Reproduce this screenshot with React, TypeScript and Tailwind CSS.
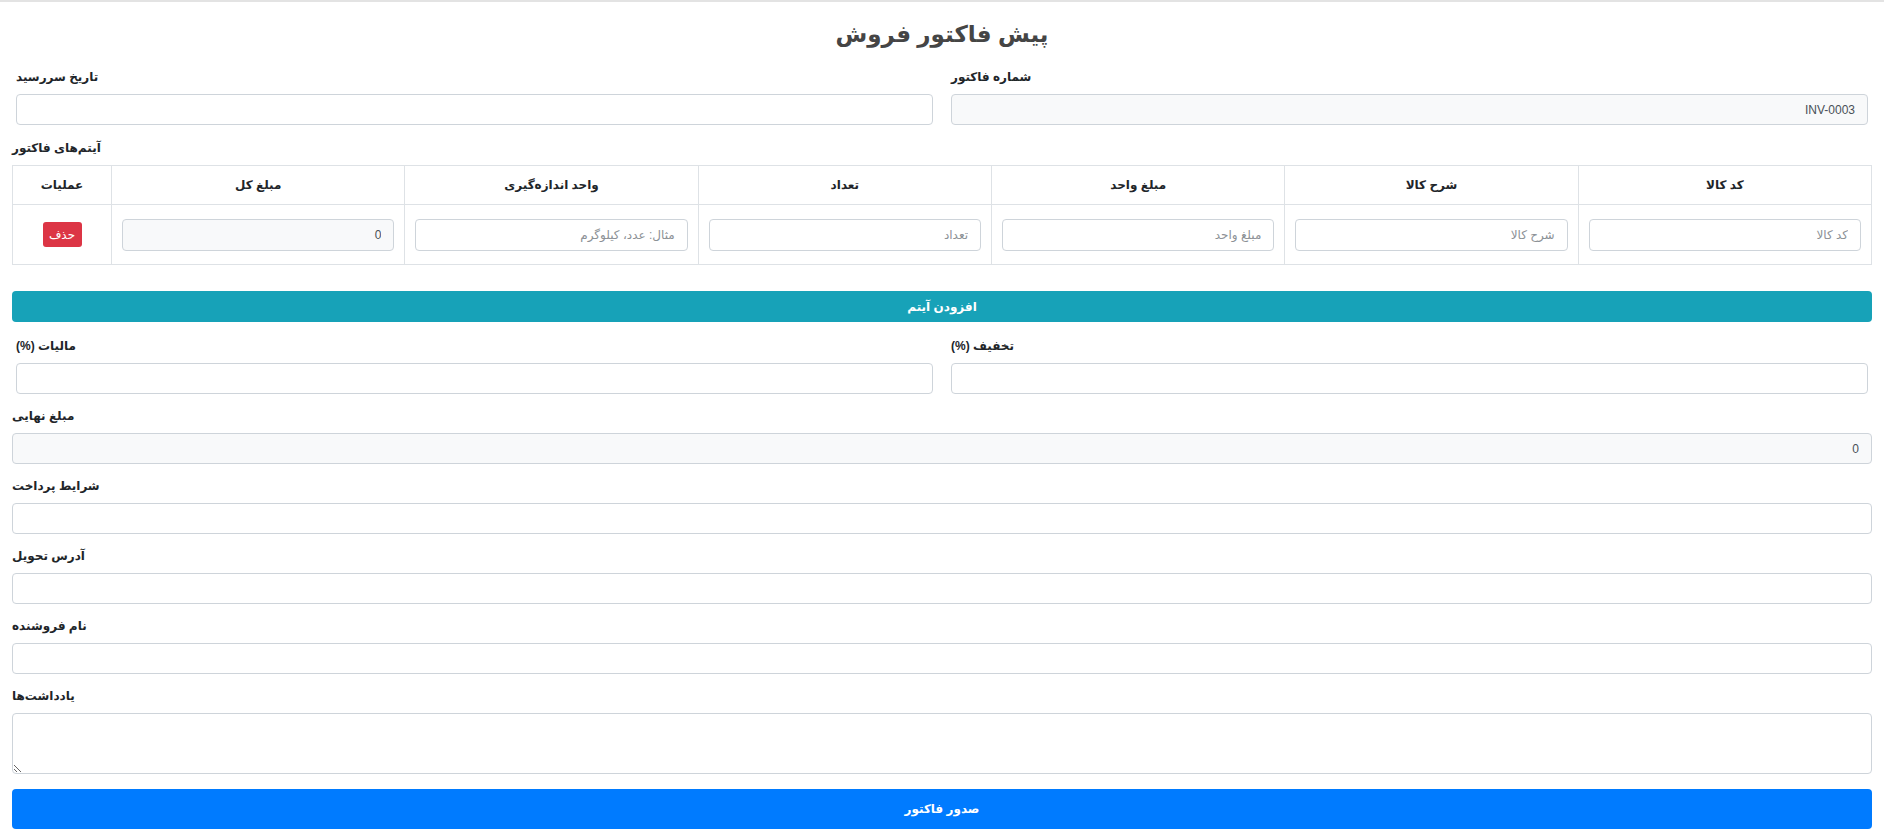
import React from "react"

const inputBase =
  "block w-full h-[31px] rounded-[4px] border border-[#ced4da] px-3 text-[12px] text-[#495057] placeholder:text-[#8c9196] outline-none"

function Label({ children }: { children: React.ReactNode }) {
  return <label className="block text-left text-[12px] font-bold leading-5 text-[#212529] mb-[7px]">{children}</label>
}

function Field({ label, value, readOnly }: { label: string; value?: string; readOnly?: boolean }) {
  return (
    <div>
      <Label>{label}</Label>
      <input
        className={`${inputBase} ${readOnly ? "bg-[#f8f9fa]" : "bg-white"}`}
        defaultValue={value}
        readOnly={readOnly}
      />
    </div>
  )
}

const columns = ["کد کالا", "شرح کالا", "مبلغ واحد", "تعداد", "واحد اندازه‌گیری", "مبلغ کل"]
const placeholders = ["کد کالا", "شرح کالا", "مبلغ واحد", "تعداد", "مثال: عدد، کیلوگرم"]

export default function App() {
  return (
    <div
      dir="rtl"
      className="min-h-screen border-t-2 border-[#e3e3e3] bg-white px-3 font-['Liberation_Sans','DejaVu_Sans',sans-serif] text-[#212529]"
    >
      <h1 className="pt-[13px] text-center text-[23px] font-bold leading-[38px] text-[#454545]">پیش فاکتور فروش</h1>

      {/* invoice number / due date */}
      <div className="mt-[14px] grid grid-cols-2 gap-x-[18px] px-1">
        <Field label="شماره فاکتور" value="INV-0003" readOnly />
        <Field label="تاریخ سررسید" />
      </div>

      <div className="mt-[13px]">
        <Label>آیتم‌های فاکتور</Label>
      </div>

      <table className="w-full table-fixed border-collapse border border-[#dee2e6]">
        <thead>
          <tr className="h-[39px]">
            {columns.map((c) => (
              <th key={c} className="border border-[#dee2e6] text-center text-[12px] font-bold">
                {c}
              </th>
            ))}
            <th className="w-[99px] border border-[#dee2e6] text-center text-[12px] font-bold">عملیات</th>
          </tr>
        </thead>
        <tbody>
          <tr className="h-[60px]">
            {placeholders.map((p) => (
              <td key={p} className="border border-[#dee2e6] px-[10px] align-middle">
                <input className={`${inputBase} h-[32px] bg-white`} placeholder={p} />
              </td>
            ))}
            <td className="border border-[#dee2e6] px-[10px] align-middle">
              <input className={`${inputBase} h-[32px] bg-[#f8f9fa]`} defaultValue="0" readOnly />
            </td>
            <td className="border border-[#dee2e6] text-center align-middle">
              <button className="h-[25px] w-[39px] rounded-[3px] bg-[#dc3545] text-[12px] text-white">حذف</button>
            </td>
          </tr>
        </tbody>
      </table>

      <button className="mt-[26px] block h-[31px] w-full rounded-[4px] bg-[#17a2b8] text-[12px] font-bold text-white">
        افزودن آیتم
      </button>

      {/* discount / tax */}
      <div className="mt-[14px] grid grid-cols-2 gap-x-[18px] px-1">
        <Field label="تخفیف (%)" />
        <Field label="مالیات (%)" />
      </div>

      <div className="mt-[12px]">
        <Field label="مبلغ نهایی" value="0" readOnly />
      </div>
      <div className="mt-[12px]">
        <Field label="شرایط پرداخت" />
      </div>
      <div className="mt-[12px]">
        <Field label="آدرس تحویل" />
      </div>
      <div className="mt-[12px]">
        <Field label="نام فروشنده" />
      </div>
      <div className="mt-[12px]">
        <Label>یادداشت‌ها</Label>
        <textarea className="block h-[61px] w-full rounded-[4px] border border-[#ced4da] px-3 py-1 text-[12px] outline-none" />
      </div>

      <button className="mt-[15px] block h-[40px] w-full rounded-[4px] bg-[#007bff] text-[12px] font-bold text-white">
        صدور فاکتور
      </button>
    </div>
  )
}
